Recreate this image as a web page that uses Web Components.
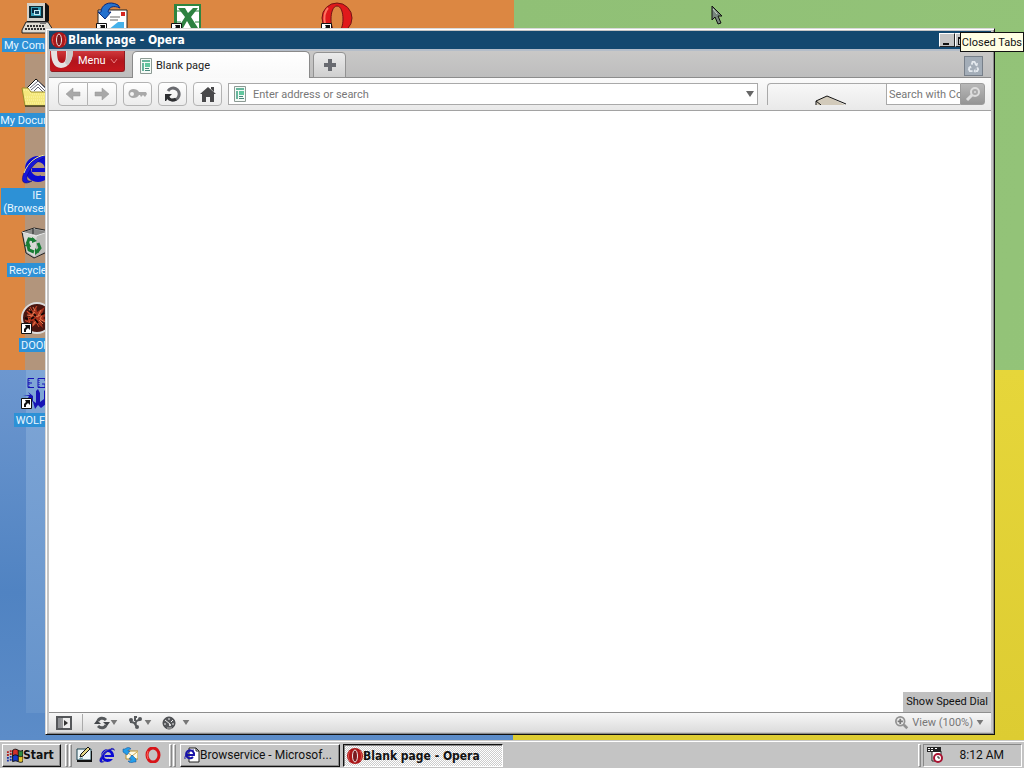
<!DOCTYPE html>
<html lang="en">
<head>
<meta charset="utf-8">
<title>Blank page - Opera</title>
<style>
html, body {
  height: 100%;
  margin: 0;
}

body {
  --bold-font: "DejaVu Sans Condensed", "DejaVu Sans", sans-serif;
  overflow: hidden;
  font: 11px/14px Roboto, "Noto Sans", sans-serif;
  color: #111;
}
</style>
</head>
<body>
<desk-top></desk-top>

<script>
const icons = {
  computer: `<svg viewBox="0 0 32 32"><path d="M6 1h19l3 3v15l-2 2H6z" fill="#111"/><path d="M6 1h18v18H6z" fill="#d4d0c8"/><path d="M8 4h14v12H8z" fill="#102830"/><path d="M10 5h10v9H10z" fill="#38a0b8"/><path d="M11 6h6v5h-6z" fill="#082840"/><path d="M13 8h6v5h-6z" fill="#c8eef4"/><path d="M14 9h4v3h-4z" fill="#124460"/><path d="M5 20h22l5 8v3H1v-3z" fill="#dedbd2" stroke="#222"/><path d="M4 27h21M6 24h17" stroke="#333" stroke-width="2" stroke-dasharray="2 1"/><path d="M19 20h6v2h-6z" fill="#777"/></svg>`,
  documents: `<svg viewBox="0 0 32 32"><path d="M4 13 15 2l13 12v8H4z" fill="#fff" stroke="#111"/><path d="m9 11 8-7 10 10M10 13l7-6 8 8M13 14l4-4 5 5" fill="none" stroke="#667" /><path d="M1 11h6l3 4h20v14H4z" fill="#f4e87c" stroke="#998c28"/><path d="M3 13h4l3 4h19M4 20h26M4 23h26M5 26h25" stroke="#fff6a8" stroke-dasharray="1 1" fill="none"/><path d="M4 29h27V15" fill="none" stroke="#111"/></svg>`,
  ie: `<svg viewBox="0 0 32 32"><circle cx="17" cy="17" r="10" fill="none" stroke="#0b0bd4" stroke-width="6"/><path d="M11 16h19v4H11z" fill="#0b0bd4"/><path d="M20 20h12v4H20z" fill="var(--gap, #b2957c)"/><path d="M31 7c0-9-16-3-24 7C1 22-1 31 5 31c2 0 4-1 6-2-5 1-7-2-3-9C12 12 26 0 31 7z" fill="#1717d8" stroke="#06066c" stroke-width=".5"/><path d="M3 21C7 10 16 4 24 3" stroke="#f6f08c" fill="none"/></svg>`,
  bin: `<svg viewBox="0 0 32 32"><path d="m1 5 12-4 16 3-3 21-13 6-8-5z" fill="#aaa" stroke="#222"/><path d="m2 6 14 3-2 21-8-5z" fill="#d9d9d6"/><path d="m16 9 12-5-3 20-11 6z" fill="#bcbcb9"/><path d="m1 5 14 4 14-5M13 1v7" fill="none" stroke="#eee"/><path d="m3 5 10-3 13 3-11 3z" fill="#8a8a88"/><path d="M12 1v6" stroke="#222"/><g fill="none" stroke="#197c33" stroke-width="3"><path d="m6 17 2-5 5 1M17 16l2 5-3 4M13 25l-5-2-1-4"/></g><path d="m11 10 5 4-5 2zM14 21v7l4-3zM3 19l5-4 2 5z" fill="#197c33"/></svg>`,
  doom: `<svg viewBox="0 0 32 32"><circle cx="16" cy="16" r="15" fill="#4b1711" stroke="#ddd" stroke-width="2"/><path d="m5 9 6 2 4-7 1 6 8-5-4 8 8-2-6 5 6 5-8-2 2 7-6-5-6 5 2-7-8 1 6-4z" fill="#a9321c"/><path d="m4 18 5 3-2-6 5 2-3-5 6 3M9 5l3 5 4-6M6 9l4 4M12 24l3-4 3 5" stroke="#c8492c" fill="none"/><path d="m6 13 5 1 2-4 3 5 6-4-3 6 5 3M12 5l2 4M20 8l-3 6M16 17l-4 6M8 7l3 4M22 22l-4-4" stroke="#e17c53" fill="none"/><path d="m4 16 3 1m3 0 3-2m1 2 3 4M9 9l2 2m2 1 2 2M23 11l-3 2" stroke="#170504" stroke-width="2" fill="none"/></svg>`,
  wolf: `<svg viewBox="0 0 32 32"><g fill="none" stroke="#1612b4"><path d="M13 1.500H7v9h6M7 6h4M24 4V1.500h-7v9h7V7h-3"/><path d="M8 1v10M18 1v10" stroke-dasharray="1 1"/></g><path d="M2 18h7l-2-3 5 4v5l3 2V14l2-2 2 4v9l4-3v-8l3-3v3l3-2v5l-4 10-5 4-3-3-3 4-2-7-5-4 1-2-6-1z" fill="#1713b5"/></svg>`,
  outlook: `<svg viewBox="0 0 32 32"><path d="M2 8h29v22H2z" fill="#fff" stroke="#222"/><path d="M25 10h4v4h-4z" fill="#d52622"/><path d="M14 15h10M14 18h8" stroke="#666"/><path d="M2 10h3c0-7 8-12 17-7l2 3c-7-3-11-1-12 4h3l-6 7z" fill="#2471cf" stroke="#0a2a7c"/><path d="m12 28 10-8h6v8z" fill="#45b1ea"/></svg>`,
  excel: `<svg viewBox="0 0 32 32"><path d="M3 2h27v28H3z" fill="#2f8540"/><path d="M6 4h22v24H6z" fill="#fff"/><path d="M7 6h7l3 5 5-5h5l-7 9 7 11h-7l-4-7-4 7H7l7-11z" fill="#2d8140"/><path d="M6 9h4M24 9h4M6 20h4M24 20h4" stroke="#2d8140"/></svg>`,
  operaBig: `<svg viewBox="0 0 32 32"><path d="M16 1a15 15 0 0 1 0 30 15 15 0 0 1 0-30zm0 3c-8 0-8 26 0 26s8-26 0-26z" fill="#e0191b" stroke="#741414" fill-rule="evenodd"/><path d="M7 6C3 10 3 17 4 22" stroke="#ff7460" stroke-width="2" fill="none"/></svg>`,
  opera: `<svg viewBox="0 0 16 16"><ellipse cx="8" cy="8" rx="8" ry="8" fill="#aa1719"/><path d="M3 3C1 5 1 11 3 13M13 3c2 2 2 8 0 10" stroke="#e35850" fill="none"/><ellipse cx="8" cy="8" rx="2.500" ry="6" fill="#7a1a20" stroke="#ede5e4"/></svg>`,
  operaFlat: `<svg viewBox="0 0 16 16"><ellipse cx="8" cy="8" rx="6" ry="7" fill="none" stroke="#d71419" stroke-width="3"/><path d="M3 4Q1 8 3 12" fill="none" stroke="#ff665d"/></svg>`,
  menuO: `<svg viewBox="0 0 24 17"><path d="M1 0h22c0 8-4 17-12 17S1 8 1 0zm6 0c0 7 1 12 5 12s4-5 4-12z" fill="#e6e2e2" fill-rule="evenodd"/><path d="M17 0h6c0 6-2 11-5 14-1 0-3-1-3-3 2-3 2-7 2-11z" fill="#c9c7c7"/></svg>`,
  page: `<svg viewBox="0 0 12 16"><path d="M.5.5h11v15H.5z" fill="#f4faf6" stroke="#8c9a94"/><path d="M2 2h8v2H2zM2 5h2v8H2z" fill="#68b69d"/><path d="M5 5h5v4H5z" fill="#62c79f"/><path d="M5 10.5h4M5 12.5h5" stroke="#47877a"/></svg>`,
  plus: `<svg viewBox="0 0 14 14"><path d="M5 1h4v4h4v4H9v4H5V9H1V5h4z" fill="#686a70"/></svg>`,
  back: `<svg viewBox="0 0 16 14"><path d="m1 7 7-6v4h7v4H8v4z" fill="#a8a8a8" stroke="#979797" stroke-width=".5"/></svg>`,
  forward: `<svg viewBox="0 0 16 14"><path d="m15 7-7-6v4H1v4h7v4z" fill="#a8a8a8" stroke="#979797" stroke-width=".5"/></svg>`,
  key: `<svg viewBox="0 0 20 14"><path d="M5 2c3 0 5 1 6 3h7l1 2-2 3-2-2-2 2-1-2h-1c-1 2-3 3-6 3C-1 11-1 2 5 2zM4 5a2 2 0 1 0 0 4 2 2 0 0 0 0-4z" fill="#a9a9a9" fill-rule="evenodd"/></svg>`,
  reload: `<svg viewBox="0 0 18 18"><path d="M4 6a6 6 0 1 1 4 9" fill="none" stroke="#6a6b70" stroke-width="3"/><path d="M4 12c1 3 5 4 8 2" fill="none" stroke="#2d2e31" stroke-width="3"/><path d="M1 9h7l-3 3-3 4H1z" fill="#2d2e31"/></svg>`,
  home: `<svg viewBox="0 0 18 18"><path d="m9 2 8 7h-2v8h-4v-5H7v5H3V9H1z" fill="#48484a"/><path d="M12 2h3v5l-3-3z" fill="#48484a"/></svg>`,
  down: `<svg viewBox="0 0 8 6"><path d="M0 0h8L4 6z" fill="currentColor"/></svg>`,
  chevron: `<svg viewBox="0 0 8 6"><path d="m1 1 3 4 3-4" fill="none" stroke="#eb8385"/></svg>`,
  box: `<svg viewBox="0 0 32 10"><path d="M1 10V6l11-5 18 9z" fill="#d2caba"/><path d="M1 10V6l11-5 19 8M1 6l5 4" fill="none" stroke="#111"/></svg>`,
  search: `<svg viewBox="0 0 16 16"><circle cx="10" cy="6" r="4" fill="#aaa" stroke="#ddd" stroke-width="2"/><path d="m7 9-5 5" stroke="#ddd" stroke-width="3"/><circle cx="10" cy="6" r="1" fill="#ddd"/></svg>`,
  recycle: `<svg viewBox="0 0 14 14"><g fill="none" stroke="#e4e9ee" stroke-width="2"><path d="m5 5 1-3h2l2 3M11 8l1 2-1 2H9M6 12H3l-1-2 1-2"/></g><path d="m12 3-1 4-3-2zM9 9v5l-2-2zM1 8l3-2 1 3z" fill="#e4e9ee"/></svg>`,
  panel: `<svg viewBox="0 0 16 14"><path d="M1 1h14v12H1z" fill="#eee" stroke="#55575a" stroke-width="2"/><path d="M2 2h3v10H2z" fill="#8e9094"/><path d="M6 1v12" stroke="#44464a"/><path d="m8 4 4 3-4 3z" fill="#333"/></svg>`,
  sync: `<svg viewBox="0 0 16 14"><path d="M4 5c1-3 5-4 8-1M12 9c-1 3-5 4-8 1" fill="none" stroke="#55585b" stroke-width="3"/><path d="M9 6h7l-3 4zM0 8h7L3 4z" fill="#44474b"/></svg>`,
  unite: `<svg viewBox="0 0 16 14"><circle cx="3" cy="4" r="2" fill="#55585b"/><circle cx="12" cy="3" r="2" fill="#55585b"/><circle cx="9" cy="11" r="2" fill="#55585b"/><path d="M2 6c4 0 5 1 6 4M12 4c-4 0-5 2-4 6M9 1H7v4" fill="none" stroke="#55585b" stroke-width="2"/></svg>`,
  turbo: `<svg viewBox="0 0 14 14"><circle cx="7" cy="7" r="6" fill="#55575b" stroke="#414347"/><path d="m3 4 5 4M7 2v2M11 4 9 6M2 8h2M10 8h2" stroke="#eee" fill="none"/><circle cx="8" cy="9" r="1" fill="#fff"/><path d="M5 12h5" stroke="#bbb"/></svg>`,
  zoom: `<svg viewBox="0 0 16 16"><circle cx="6" cy="6" r="5" fill="#eee" stroke="#929292" stroke-width="2"/><path d="m10 10 4 4" stroke="#929292" stroke-width="3"/><path d="M3 6h6M6 3v6" stroke="#777" stroke-width="2"/></svg>`,
  windows: `<svg viewBox="0 0 18 16"><path d="M7 3c3-2 4-1 6 0v6c-2-1-4-1-6 0z" fill="#d3302b"/><path d="M13 3c2 1 3 1 5 0v6c-2 1-3 1-5 0z" fill="#2d8b40"/><path d="M7 9c3-2 4-1 6 0v6c-2-1-4-1-6 0z" fill="#1539c9"/><path d="M13 9c2 1 3 1 5 0v6c-2 1-3 1-5 0z" fill="#e5c42e"/><path d="M7 15V3c3-2 4-1 6 0 2 1 3 1 5 0v12c-2 1-3 1-5 0-2-1-4-1-6 0zm6-12v12M7 9c3-2 4-1 6 0 2 1 3 1 5 0" fill="none" stroke="#111"/><path d="M1 5h2m1-1h2M1 8h2m1-1h2" stroke="#b3231f" stroke-width="2"/><path d="M1 11h2m1-1h2M1 14h2m1-1h2" stroke="#1733aa" stroke-width="2"/></svg>`,
  showDesktop: `<svg viewBox="0 0 16 16"><path d="M1 2h14v11H1z" fill="#eef8fa" stroke="#1b4350"/><path d="M1 14h15V4" fill="none" stroke="#111" stroke-width="2"/><path d="m4 10 1-3 7-7 2 2-7 7z" fill="#e4d687" stroke="#111"/><path d="m3 12 4-1" stroke="#5590a0"/></svg>`,
  outlookSmall: `<svg viewBox="0 0 16 16"><path d="M4 4h12v8H4z" fill="#fffbe4" stroke="#b8902c"/><path d="m5 5 5 4 5-4" fill="none" stroke="#c9a54c"/><path d="M1 2h2c2-2 5-2 6 0-2 0-3 1-3 2h2L5 8 1 5zM14 15h-2c-2 1-5 1-6-1 2 0 3 0 3-2H7l3-4 4 4z" fill="#249ee9" stroke="#174a91" stroke-width=".5"/></svg>`,
  ieDoc: `<svg viewBox="0 0 16 16"><path d="M5 1h7l3 3v11H5z" fill="#fff" stroke="#222"/><path d="M12 1v3h3" fill="none" stroke="#222"/><path d="M9 10a4 4 0 1 1 1-2H3" fill="none" stroke="#1712a8" stroke-width="2"/><path d="M1 12C0 8 6 3 10 3" stroke="#1712a8" fill="none"/></svg>`,
  tasks: `<svg viewBox="0 0 16 16"><path d="M5 4h9v10H5z" fill="#fff" stroke="#222"/><path d="M0 0h14v5H0z" fill="#222"/><path d="M1 1h2v1H1zM4 1h2v1H4zM8 1h2v1H8zM1 3h2v1H1zM4 3h2v1H4z" fill="#fff"/><circle cx="11" cy="11" r="4" fill="#fff" stroke="#a81332" stroke-width="2"/><path d="M11 9v2h2" fill="none" stroke="#222"/></svg>`,
  shortcut: `<svg viewBox="0 0 11 11"><path d="M.5.5h10v10H.5z" fill="#fff" stroke="#111"/><path d="M4 2h5v5L7 5 5 7v2H3V6l2-2z" fill="#111"/></svg>`,
  pointer: `<svg viewBox="0 0 12 20"><path d="M1 1v14l3-3 3 7 3-1-3-7h4z" fill="#77867c" stroke="#111"/><path d="m2 4 4 5" stroke="#c8d6cb"/></svg>`
};

const define = (name, html, setup) => {
  const template = document.createElement("template");
  template.innerHTML = html;

  customElements.define(name, class extends HTMLElement {
    constructor() {
      super();
      this.attachShadow({ mode: "open" });
      this.shadowRoot.appendChild(template.content.cloneNode(true));
    }

    connectedCallback() {
      if (setup) {
        setup(this, this.shadowRoot);
      }
    }
  });
};

// <ui-icon name="" w="" h="">, h falls back to w
define("ui-icon", `
<style>
:host {
  display: inline-block;
  flex: none;
}

span {
  display: contents;
}

svg {
  display: block;
  width: 100%;
  height: 100%;
}
</style>
<span></span>
`, (host, root) => {
  const width = host.getAttribute("w") || 16;
  host.style.width = `${width}px`;
  host.style.height = `${host.getAttribute("h") || width}px`;
  root.querySelector("span").innerHTML = icons[host.getAttribute("name")];
});

define("desktop-icon", `
<style>
:host {
  position: relative;
  display: flex;
  flex-direction: column;
  align-items: center;
  gap: 4px;
  width: 74px;
  color: #e8f6ff;
  text-align: center;
}

.label {
  padding: 1px 2px 0;
  background: #2d91d6;
  line-height: 13px;
  white-space: nowrap;
}

.label:empty {
  display: none;
}

.shortcut {
  position: absolute;
  left: 21px;
  top: 21px;
}

:host(:not([shortcut])) .shortcut {
  display: none;
}
</style>
<div class="picture"></div>
<ui-icon class="shortcut" name="shortcut" w="11"></ui-icon>
<span class="label"><slot></slot></span>
`, (host, root) => {
  root.querySelector(".picture").innerHTML =
    `<ui-icon style="display: block" name="${host.getAttribute("icon")}" w="32"></ui-icon>`;
});

define("title-bar", `
<style>
:host {
  display: flex;
  align-items: center;
  height: 18px;
  padding: 0 2px;
  background: #13486f;
  color: #fff;
}

h1 {
  flex: 1;
  margin: 0 0 0 1px;
  font: bold 12px/18px var(--bold-font);
}

.controls {
  display: flex;
}

button {
  width: 16px;
  height: 14px;
  padding: 0;
  border: 1px solid;
  border-color: #fff #222 #222 #fff;
  background: #c4c4c4;
}

button i {
  display: block;
  box-sizing: border-box;
  width: 6px;
  height: 8px;
  margin: 1px 0 0 3px;
  border-bottom: 2px solid #111;
}

button.max i {
  width: 9px;
  margin-left: 2px;
  border: 1px solid #111;
  border-top-width: 2px;
}

button.close {
  margin-left: 2px;
}
</style>
<ui-icon name="opera" w="16"></ui-icon>
<h1><slot></slot></h1>
<div class="controls">
  <button aria-label="Minimize"><i></i></button>
  <button class="max" aria-label="Maximize"><i></i></button>
  <button class="close" aria-label="Close"></button>
</div>
`);

define("tab-strip", `
<style>
:host {
  display: flex;
  align-items: flex-start;
  box-sizing: border-box;
  height: 29px;
  padding-left: 1px;
  border-top: 2px solid #b4bdc9;
  background: linear-gradient(#c9c8c7, #bdbdbd);
  box-shadow: inset 0 -1px #8c8c8c;
}

button {
  font: inherit;
  padding: 0;
}

.menu {
  display: flex;
  align-items: center;
  gap: 4px;
  box-sizing: border-box;
  width: 75px;
  height: 21px;
  margin-right: 7px;
  overflow: hidden;
  border: 1px solid #8f1a20;
  border-width: 0 1px 1px 0;
  border-radius: 0 0 3px 3px;
  background: linear-gradient(#d0393c, #b2151c 50%, #c4161d);
  color: #fff;
}

.menu .o {
  align-self: flex-start;
}

.tab {
  display: flex;
  align-items: center;
  gap: 4px;
  box-sizing: border-box;
  width: 178px;
  height: 27px;
  padding: 1px 0 0 7px;
  border: 1px solid #8a8a8a;
  border-bottom: 0;
  border-radius: 5px 5px 0 0;
  background: linear-gradient(#fff, #f9f9f9);
  color: #222;
}

.add {
  width: 33px;
  height: 26px;
  margin: 1px 0 0 3px;
  border: 1px solid #929292;
  border-radius: 4px 4px 0 0;
  background: linear-gradient(#ebebeb, #cfcfcf);
}

.add ui-icon {
  vertical-align: middle;
}

.closed {
  width: 19px;
  height: 20px;
  margin: 5px 8px 0 auto;
  border: 1px solid #777f89;
  background: #a3adb8;
}

.closed ui-icon {
  display: block;
  margin: auto;
}
</style>
<button class="menu"><ui-icon class="o" name="menuO" w="24" h="17"></ui-icon>Menu<ui-icon name="chevron" w="8" h="6"></ui-icon></button>
<button class="tab" role="tab" aria-selected="true"><ui-icon name="page" w="12" h="16"></ui-icon><slot></slot></button>
<button class="add" aria-label="New tab"><ui-icon name="plus" w="14"></ui-icon></button>
<button class="closed" aria-label="Closed Tabs"><ui-icon name="recycle" w="13"></ui-icon></button>
`);

define("address-bar", `
<style>
:host {
  display: flex;
  align-items: center;
  gap: 6px;
  box-sizing: border-box;
  height: 33px;
  padding: 0 6px 0 9px;
  border-bottom: 1px solid #a2a2a2;
  background: linear-gradient(#fbfbfb, #e9e9e9);
}

button {
  display: flex;
  align-items: center;
  justify-content: center;
  box-sizing: border-box;
  width: 29px;
  height: 24px;
  padding: 0;
  border: 1px solid #b3b3b3;
  border-radius: 4px;
  background: linear-gradient(#fff, #ececec);
}

.pair {
  display: flex;
}

.pair button:first-child {
  width: 30px;
  border-radius: 4px 0 0 4px;
}

.pair button:last-child {
  border-left: 0;
  border-radius: 0 4px 4px 0;
}

input {
  flex: 1;
  min-width: 0;
  padding: 1px 0 0;
  border: 0;
  outline: 0;
  background: none;
  font: inherit;
}

input::placeholder {
  color: #777;
}

.field {
  display: flex;
  flex: 1;
  align-items: center;
  gap: 7px;
  box-sizing: border-box;
  height: 22px;
  padding: 0 3px 0 5px;
  border: 1px solid #a9a9a9;
  background: #fff;
}

.field button {
  width: 8px;
  height: 18px;
  border: 0;
  background: none;
  color: #666;
}

.search {
  display: flex;
  width: 218px;
  height: 22px;
  margin-left: 3px;
}

.engine {
  display: flex;
  flex: 1;
  align-items: flex-end;
  justify-content: center;
  box-sizing: border-box;
  padding-left: 8px;
  border: 1px solid #a9a9a9;
  border-width: 1px 0 0 1px;
  border-radius: 4px 0 0 0;
}

.search input {
  flex: none;
  box-sizing: border-box;
  width: 74px;
  padding-left: 2px;
  border: 1px solid #a9a9a9;
  border-right: 0;
  background: #fff;
}

.search > button {
  width: 25px;
  height: 22px;
  border-color: #9c9c9c;
  border-radius: 0 3px 3px 0;
  background: linear-gradient(#b8b8b8, #949494);
}
</style>
<div class="pair">
  <button aria-label="Back"><ui-icon name="back" w="16" h="14"></ui-icon></button>
  <button aria-label="Forward"><ui-icon name="forward" w="16" h="14"></ui-icon></button>
</div>
<button aria-label="Wand"><ui-icon name="key" w="20" h="14"></ui-icon></button>
<button aria-label="Reload"><ui-icon name="reload" w="18"></ui-icon></button>
<button aria-label="Home"><ui-icon name="home" w="18"></ui-icon></button>
<div class="field">
  <ui-icon name="page" w="12" h="16"></ui-icon>
  <input type="text" aria-label="Address" placeholder="Enter address or search">
  <button aria-label="History"><ui-icon name="down" w="8" h="6"></ui-icon></button>
</div>
<div class="search">
  <div class="engine"><ui-icon name="box" w="32" h="10"></ui-icon></div>
  <input type="text" aria-label="Search" placeholder="Search with Computer">
  <button aria-label="Search"><ui-icon name="search" w="16"></ui-icon></button>
</div>
`);

define("status-bar", `
<style>
:host {
  display: flex;
  align-items: center;
  box-sizing: border-box;
  height: 20px;
  padding: 0 7px;
  border-top: 1px solid #8e8e8e;
  background: linear-gradient(#f7f7f7, #dcdcdc);
  color: #777;
}

button {
  display: flex;
  align-items: center;
  padding: 0;
  border: 0;
  background: none;
  color: inherit;
  font: inherit;
}

hr {
  width: 0;
  height: 17px;
  margin: 0 11px 0 10px;
  border: 0;
  border-left: 1px solid #aaa;
}

.tools {
  display: flex;
  gap: 10px;
}

.tools button:last-child {
  gap: 6px;
}

.view {
  gap: 3px;
  margin-left: auto;
}
</style>
<button aria-label="Panels"><ui-icon name="panel" w="16" h="14"></ui-icon></button>
<hr>
<div class="tools">
  <button aria-label="Link"><ui-icon name="sync" w="16" h="14"></ui-icon><ui-icon name="down" w="8" h="5"></ui-icon></button>
  <button aria-label="Unite"><ui-icon name="unite" w="16" h="14"></ui-icon><ui-icon name="down" w="8" h="5"></ui-icon></button>
  <button aria-label="Turbo"><ui-icon name="turbo" w="14"></ui-icon><ui-icon name="down" w="8" h="5"></ui-icon></button>
</div>
<button class="view"><ui-icon name="zoom" w="14"></ui-icon>View (100%)<ui-icon name="down" w="8" h="5"></ui-icon></button>
`);

define("opera-window", `
<style>
:host {
  display: flex;
  flex-direction: column;
  box-sizing: border-box;
  padding: 1px 3px 1px 1px;
  border: 1px solid;
  border-color: #d8d8d8 #111 #111 #d8d8d8;
  background: #c4c4c4;
  box-shadow: inset 1px 1px #fff, inset -1px -1px #8a8a8a;
}

.frame {
  display: flex;
  flex: 1;
  flex-direction: column;
  margin: 1px 0 1px 2px;
}

main {
  display: flex;
  flex: 1;
  align-items: flex-end;
  justify-content: flex-end;
  background: #fff;
}

.dial {
  padding: 3px;
  border: 0;
  background: #c0c0c0;
  color: #111;
  font: inherit;
}
</style>
<div class="frame">
  <title-bar>Blank page - Opera</title-bar>
  <tab-strip>Blank page</tab-strip>
  <address-bar></address-bar>
  <main><button class="dial">Show Speed Dial</button></main>
  <status-bar></status-bar>
</div>
`);

define("task-button", `
<style>
:host {
  display: block;
}

button {
  display: flex;
  align-items: center;
  box-sizing: border-box;
  width: 100%;
  height: 23px;
  padding: 0 3px;
  border: 1px solid;
  border-color: #fff #111 #111 #fff;
  background: #c4c4c4;
  box-shadow: inset -1px -1px #888;
  color: #111;
  font: inherit;
  font-size: 12px;
  white-space: nowrap;
}

:host([pressed]) button {
  padding-top: 1px;
  border-color: #111 #fff #fff #111;
  background: repeating-conic-gradient(#fff 0 25%, #ccc 0 50%) 0 0 / 2px 2px;
  box-shadow: inset 1px 1px #888;
}

:host([bold]) button {
  font: bold 12px/14px var(--bold-font);
}
</style>
<button><slot></slot></button>
`);

define("task-bar", `
<style>
:host {
  display: flex;
  align-items: center;
  box-sizing: border-box;
  height: 28px;
  padding: 1px 2px 0;
  border-top: 1px solid #c8c8c8;
  background: #c4c4c4;
  box-shadow: inset 0 1px #fff;
}

.start {
  width: 59px;
}

.grip {
  width: 1px;
  height: 21px;
  margin-left: 4px;
  border: 1px solid;
  border-color: #fff #888 #888 #fff;
}

.grip + .grip {
  margin-left: 1px;
}

.quick {
  --gap: #c4c4c4;
  display: flex;
  gap: 7px;
  margin: 0 4px;
}

.quick button {
  padding: 0;
  border: 0;
  background: none;
}

.quick ui-icon {
  display: block;
}

.tasks {
  display: flex;
  flex: 1;
  gap: 3px;
  margin-left: 4px;
}

.tasks task-button {
  width: 160px;
}

.tray {
  display: flex;
  align-items: center;
  justify-content: space-between;
  box-sizing: border-box;
  width: 99px;
  height: 23px;
  margin-left: 2px;
  padding: 0 17px 0 3px;
  border: 1px solid;
  border-color: #888 #fff #fff #888;
  font-size: 12px;
}
</style>
<task-button class="start" bold><ui-icon name="windows" w="17" h="16"></ui-icon>Start</task-button>
<span class="grip"></span><span class="grip"></span>
<div class="quick">
  <button aria-label="Show Desktop"><ui-icon name="showDesktop" w="16"></ui-icon></button>
  <button aria-label="Internet Explorer"><ui-icon name="ie" w="16"></ui-icon></button>
  <button aria-label="Outlook Express"><ui-icon name="outlookSmall" w="16"></ui-icon></button>
  <button aria-label="Opera"><ui-icon name="operaFlat" w="16"></ui-icon></button>
</div>
<span class="grip"></span><span class="grip"></span>
<div class="tasks">
  <task-button><ui-icon name="ieDoc" w="16"></ui-icon>Browservice - Microsof...</task-button>
  <task-button pressed bold><ui-icon name="opera" w="16"></ui-icon>Blank page - Opera</task-button>
</div>
<span class="grip"></span>
<div class="tray"><ui-icon name="tasks" w="16"></ui-icon><time>8:12 AM</time></div>
`);

define("desk-top", `
<style>
:host {
  display: flex;
  flex-direction: column;
  height: 100vh;
}

.wallpaper {
  position: relative;
  flex: 1;
  background:
    linear-gradient(90deg, #b2957c, #b2957c) 25px 54px / 30px calc(50% - 54px) no-repeat,
    linear-gradient(#7fa6d6, #6593cb) 26px calc(100% - 27px) / 30px calc(50% - 27px) no-repeat,
    linear-gradient(#dc8742, #dc8742) 0 0 / 514px 50% no-repeat,
    linear-gradient(100deg, #90c076, #96c67a) 514px 0 / 100% 50% no-repeat,
    linear-gradient(#6d97cf, #5083c2 60%, #5c8cc8) 0 100% / 513px 50% no-repeat,
    linear-gradient(#e6d63a, #ddcc32) 513px 100% / 100% 50% no-repeat;
}

/* the blue and orange squares stop at 513px, the rest is filled by the right half */
.icons {
  display: grid;
  grid-template-rows: repeat(6, 75px);
  grid-auto-columns: 75px;
  padding-top: 2px;
}

.icons desktop-icon {
  grid-column: 1;
}

.icons .c2 { grid-area: 1 / 2; }
.icons .c3 { grid-area: 1 / 3; }
.icons .c5 { grid-area: 1 / 5; }

/* windows and pointer float over the icons */
opera-window {
  position: absolute;
  inset: 28px 29px 5px 45px;
}

.tip {
  position: absolute;
  top: 32px;
  right: 0;
  padding: 3px 1px 1px;
  border: 1px solid #111;
  background: #fffee4;
}

.pointer {
  position: absolute;
  left: 711px;
  top: 5px;
}
</style>
<div class="wallpaper">
  <div class="icons">
    <desktop-icon icon="computer">My Computer</desktop-icon>
    <desktop-icon icon="documents">My Documents</desktop-icon>
    <desktop-icon icon="ie">IE<br>(Browservice)</desktop-icon>
    <desktop-icon icon="bin">Recycle Bin</desktop-icon>
    <desktop-icon icon="doom" shortcut>DOOM</desktop-icon>
    <desktop-icon icon="wolf" shortcut>WOLF3D</desktop-icon>
    <desktop-icon class="c2" icon="outlook" shortcut></desktop-icon>
    <desktop-icon class="c3" icon="excel" shortcut></desktop-icon>
    <desktop-icon class="c5" icon="operaBig" shortcut></desktop-icon>
  </div>
  <opera-window></opera-window>
  <div class="tip" role="tooltip">Closed Tabs</div>
  <ui-icon class="pointer" name="pointer" w="12" h="20"></ui-icon>
</div>
<task-bar></task-bar>
`);
</script>
</body>
</html>
